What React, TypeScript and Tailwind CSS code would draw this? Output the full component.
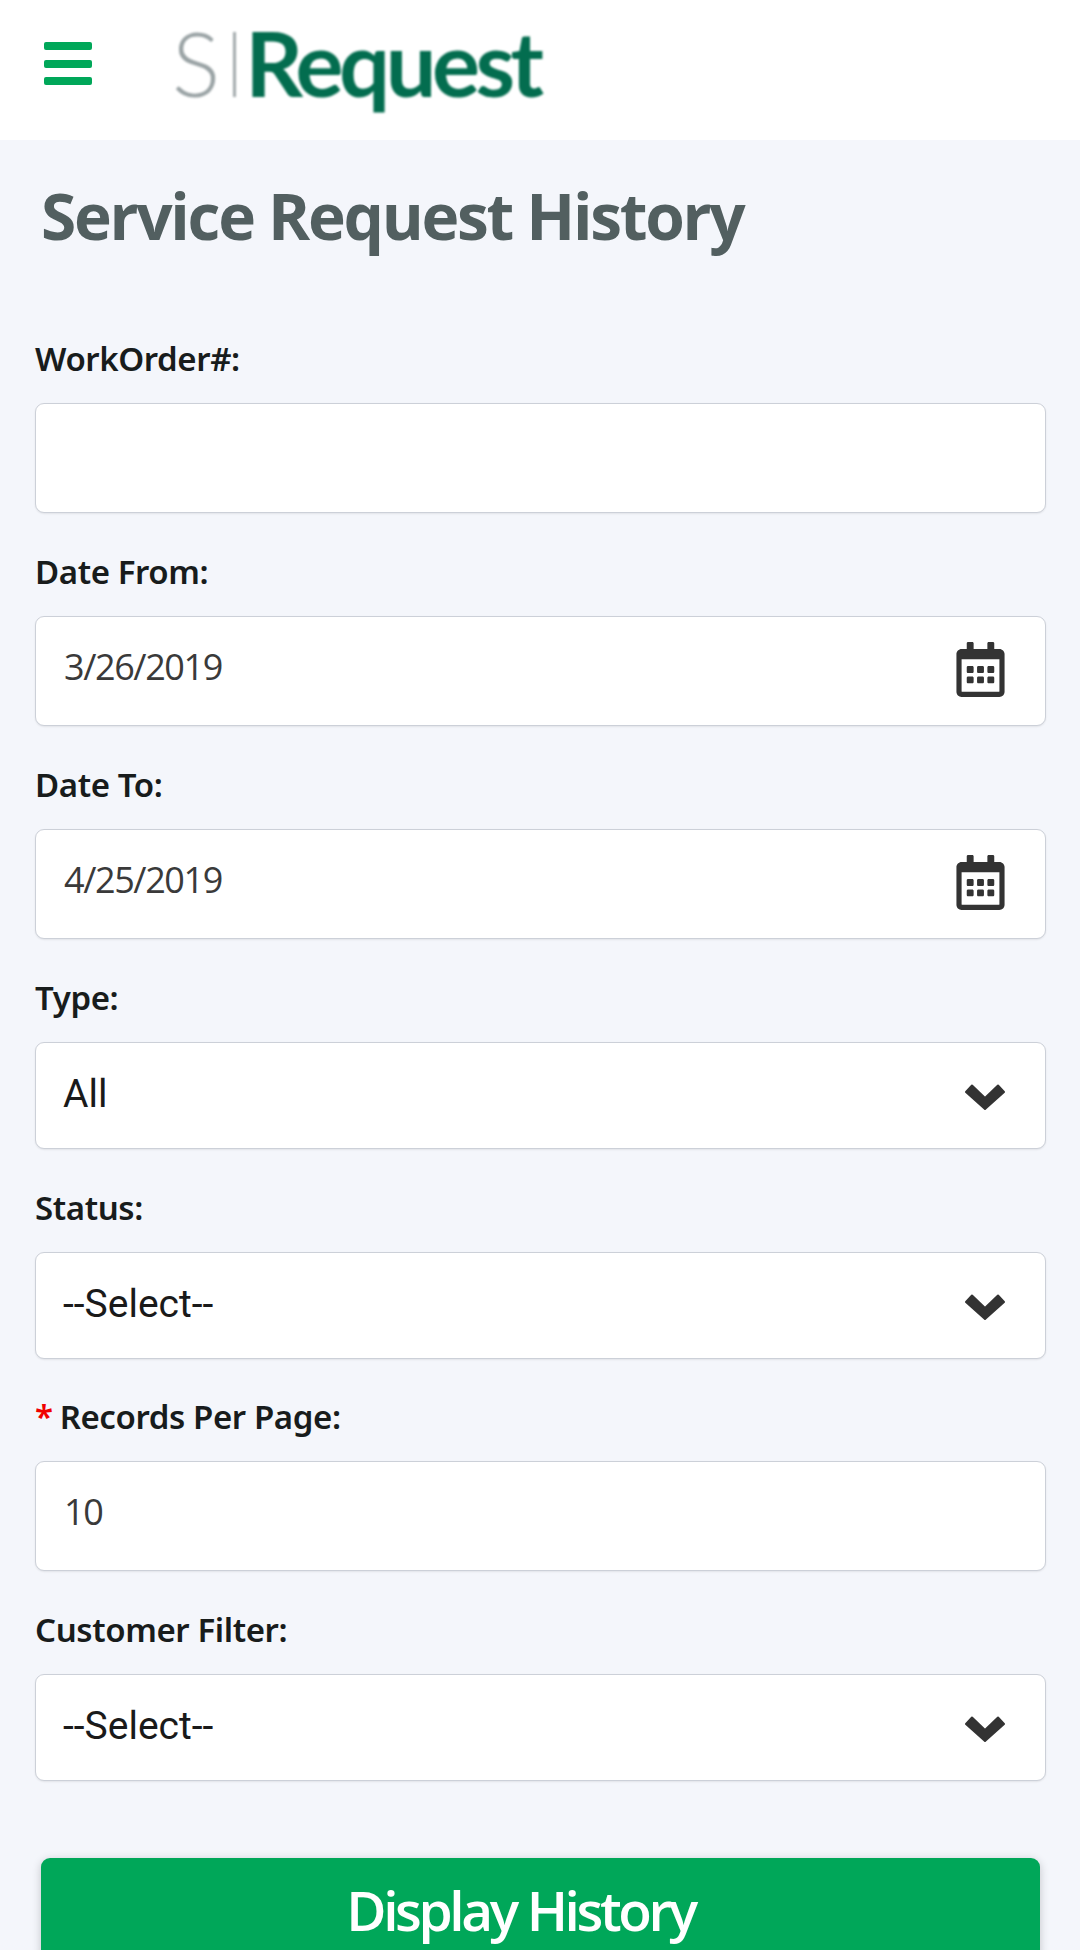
import { FaRegCalendarAlt } from 'react-icons/fa'

const labelClass =
  "block font-['Noto_Sans'] font-semibold text-[33px] leading-[34px] tracking-[-0.4px] text-[#181c1c]"
const boxClass =
  'w-full bg-white border border-[#ccd0d8] rounded-[9px] shadow-[0_1px_2px_rgba(0,0,0,0.08)] outline-none'

function TextField({
  label,
  value,
  required,
  withCalendar,
}: {
  label: string
  value?: string
  required?: boolean
  withCalendar?: boolean
}) {
  return (
    <div className="mb-[42px]">
      <label className={labelClass}>
        {required && <span className="text-[#f00000] mr-[7px]">*</span>}
        {label}
      </label>
      <div className="relative mt-[27px]">
        <input
          readOnly
          value={value ?? ''}
          className={`${boxClass} h-[110px] pl-[28px] pb-[9px] font-['Open_Sans'] text-[36px] tracking-[-1.4px] text-[#3a3a3a]`}
        />
        {withCalendar && (
          <FaRegCalendarAlt className="absolute right-[38px] top-[26px] text-[55px] text-[#333333]" />
        )}
      </div>
    </div>
  )
}

function SelectField({ label, value }: { label: string; value: string }) {
  return (
    <div className="mb-[41.5px]">
      <label className={labelClass}>{label}</label>
      <div className="relative mt-[27px]">
        <select
          value={value}
          onChange={() => {}}
          className={`${boxClass} appearance-none h-[107px] pl-[27px] pb-[2px] font-['Roboto'] text-[39px] text-[#1a1a1a]`}
        >
          <option>{value}</option>
        </select>
        <svg
          viewBox="0 0 40 26"
          className="absolute right-[41px] top-[42px] w-[40px] h-[26px] pointer-events-none"
          fill="#333333"
          stroke="#333333"
          strokeWidth="2"
          strokeLinejoin="round"
        >
          <path d="M7 1.5 L20 14 L33 1.5 L39 8 L20 25 L1 8 Z" />
        </svg>
      </div>
    </div>
  )
}

export default function App() {
  return (
    <div className="h-[1950px] overflow-hidden bg-[#f4f6fb]">
      {/* Header */}
      <header className="h-[140px] bg-white flex items-start">
        <button className="mt-[42px] ml-[44px] w-[48px] flex flex-col gap-[9.5px]">
          <span className="h-[8px] rounded-[2px] bg-[#00a759]" />
          <span className="h-[8px] rounded-[2px] bg-[#00a759]" />
          <span className="h-[8px] rounded-[2px] bg-[#00a759]" />
        </button>
        <div className="ml-[80px] mt-[10px] flex items-baseline font-['Lato'] text-[90px] leading-[104px] blur-[0.8px] select-none">
          <span className="font-light text-[#9aa3a5]">S</span>
          <span className="inline-block w-[3px] h-[65px] ml-[13px] mr-[9px] bg-[#a3abad]" />
          <span className="font-bold text-[#036d4f] tracking-[-4.5px]">Request</span>
        </div>
      </header>

      {/* Form */}
      <main className="pl-[35px] pr-[34px]">
        <h1 className="ml-[6px] mt-[38px] mb-[88px] font-['Open_Sans'] font-bold text-[64px] leading-[76px] tracking-[-2.3px] text-[#525f60]">
          Service Request History
        </h1>
        <TextField label="WorkOrder#:" />
        <TextField label="Date From:" value="3/26/2019" withCalendar />
        <TextField label="Date To:" value="4/25/2019" withCalendar />
        <SelectField label="Type:" value="All" />
        <SelectField label="Status:" value="--Select--" />
        <TextField label="Records Per Page:" value="10" required />
        <SelectField label="Customer Filter:" value="--Select--" />
        <button className="flex items-start justify-center mx-[6px] mt-[77px] w-[999px] h-[140px] pt-[14px] pr-[40px] bg-[#00a759] rounded-[9px] shadow-[0_2px_10px_rgba(0,0,0,0.2)] font-['Open_Sans'] font-semibold text-[55px] leading-[76px] tracking-[-3.4px] text-white">
          Display History
        </button>
      </main>
    </div>
  )
}
